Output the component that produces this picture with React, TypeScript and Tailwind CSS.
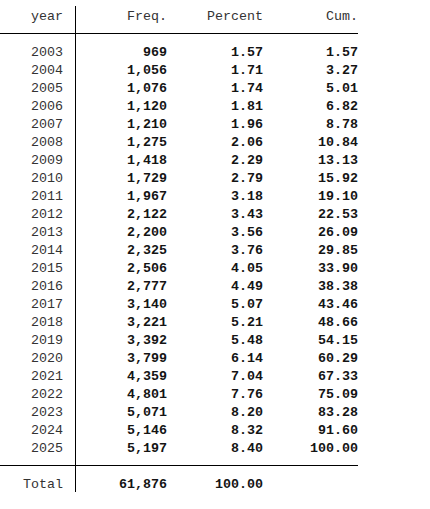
import React from "react";

const rows: [string, string, string, string][] = [
  ["2003", "969", "1.57", "1.57"],
  ["2004", "1,056", "1.71", "3.27"],
  ["2005", "1,076", "1.74", "5.01"],
  ["2006", "1,120", "1.81", "6.82"],
  ["2007", "1,210", "1.96", "8.78"],
  ["2008", "1,275", "2.06", "10.84"],
  ["2009", "1,418", "2.29", "13.13"],
  ["2010", "1,729", "2.79", "15.92"],
  ["2011", "1,967", "3.18", "19.10"],
  ["2012", "2,122", "3.43", "22.53"],
  ["2013", "2,200", "3.56", "26.09"],
  ["2014", "2,325", "3.76", "29.85"],
  ["2015", "2,506", "4.05", "33.90"],
  ["2016", "2,777", "4.49", "38.38"],
  ["2017", "3,140", "5.07", "43.46"],
  ["2018", "3,221", "5.21", "48.66"],
  ["2019", "3,392", "5.48", "54.15"],
  ["2020", "3,799", "6.14", "60.29"],
  ["2021", "4,359", "7.04", "67.33"],
  ["2022", "4,801", "7.76", "75.09"],
  ["2023", "5,071", "8.20", "83.28"],
  ["2024", "5,146", "8.32", "91.60"],
  ["2025", "5,197", "8.40", "100.00"],
];

function Row({
  label,
  a,
  b,
  c,
  bold = true,
}: {
  label: string;
  a: string;
  b: string;
  c: string;
  bold?: boolean;
}) {
  const num = bold ? "font-bold text-[#141414]" : "text-[#333]";
  return (
    <div className="flex h-[18px] leading-[21px]">
      <div className="w-[76px] shrink-0 border-r border-black pr-[12px] text-right text-[#333]">
        {label}
      </div>
      <div className={`w-[91px] shrink-0 text-right ${num}`}>{a}</div>
      <div className={`w-[96px] shrink-0 text-right ${num}`}>{b}</div>
      <div className={`w-[95px] shrink-0 text-right ${num}`}>{c}</div>
    </div>
  );
}

function Sep() {
  return (
    <div className="flex h-[18px]">
      <div className="w-[76px] shrink-0 border-r border-black">
        <div className="h-[10px] border-b border-black" />
      </div>
      <div className="w-[282px] shrink-0">
        <div className="h-[10px] border-b border-black" />
      </div>
    </div>
  );
}

export default function App() {
  return (
    <div
      className="w-[430px] h-[509px] bg-white pt-[6px] text-[13.33px]"
      style={{ fontFamily: '"Liberation Mono", "Courier New", monospace' }}
    >
      <Row label="year" a="Freq." b="Percent" c="Cum." bold={false} />
      <Sep />
      {rows.map((r) => (
        <Row key={r[0]} label={r[0]} a={r[1]} b={r[2]} c={r[3]} />
      ))}
      <Sep />
      <Row label="Total" a="61,876" b="100.00" c="" />
    </div>
  );
}
